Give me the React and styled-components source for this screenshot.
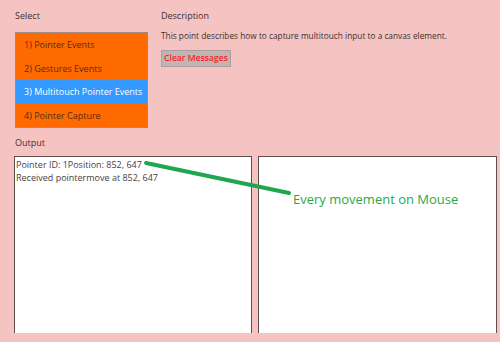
import React from "react";
import styled, { createGlobalStyle } from "styled-components";

const GlobalStyle = createGlobalStyle`
  html, body {
    margin: 0;
    padding: 0;
    background: #f6c3c3;
    font-family: "Open Sans", "Noto Sans", sans-serif;
  }
`;

const Page = styled.div`
  position: relative;
  width: 500px;
  height: 342px;
  overflow: hidden;
  padding: 9px 0 0 15px;
  box-sizing: border-box;
`;

const TopRow = styled.div`
  display: flex;
  gap: 13px;
`;

const Column = styled.div`
  display: flex;
  flex-direction: column;
`;

const Label = styled.div`
  font-size: 9px;
  line-height: 14px;
  color: #3a3030;
  height: 14px;
  margin-bottom: ${(p) => p.$gap || 9}px;
`;

const SelectList = styled.div`
  width: 133px;
  border: 1px solid #a08a8a;
  box-sizing: border-box;
  display: flex;
  flex-direction: column;
`;

const Option = styled.div`
  height: 23.5px;
  line-height: 23.5px;
  padding-left: 8px;
  font-size: 9px;
  color: ${(p) => (p.$selected ? "#ffffff" : "#5a2a10")};
  background: ${(p) => (p.$selected ? "#3399ff" : "#ff6a00")};
  white-space: nowrap;
`;

const Description = styled.div`
  font-size: 8.3px;
  line-height: 14px;
  color: #3a3030;
  margin-bottom: 7px;
`;

const ClearButton = styled.button`
  align-self: flex-start;
  width: 70px;
  height: 17px;
  padding: 0;
  border: 1px solid #b09c9c;
  background: #c0b4b4;
  color: #ff1f1f;
  font-family: "Open Sans", "Noto Sans", sans-serif;
  font-weight: 600;
  font-size: 8.6px;
  line-height: 15px;
  text-align: center;
`;

const OutputLabel = styled(Label)`
  margin-top: 8px;
  margin-bottom: 6px;
`;

const OutputRow = styled.div`
  display: flex;
  gap: 6px;
  margin-left: -1px;
`;

const OutputBox = styled.div`
  width: ${(p) => p.$w}px;
  height: 177px;
  background: #ffffff;
  border: 1px solid #5e4e4e;
  border-bottom: none;
  box-sizing: border-box;
  padding: 1px 0 0 1px;
  font-size: 9px;
  line-height: 13px;
  color: #4a4040;
`;

const Note = styled.div`
  color: #2aa84a;
  font-size: 13px;
  line-height: 16px;
  padding: 33px 0 0 33px;
  white-space: nowrap;
`;

const Arrow = styled.svg`
  position: absolute;
  left: 0;
  top: 0;
  pointer-events: none;
`;

const options = [
  "1) Pointer Events",
  "2) Gestures Events",
  "3) Multitouch Pointer Events",
  "4) Pointer Capture",
];

export default function App() {
  return (
    <>
      <GlobalStyle />
      <Page>
        <TopRow>
          <Column>
            <Label>Select</Label>
            <SelectList>
              {options.map((o, i) => (
                <Option key={o} $selected={i === 2}>
                  {o}
                </Option>
              ))}
            </SelectList>
          </Column>
          <Column>
            <Label $gap={6}>Description</Label>
            <Description>
              This point describes how to capture multitouch input to a canvas element.
            </Description>
            <ClearButton>Clear Messages</ClearButton>
          </Column>
        </TopRow>
        <OutputLabel>Output</OutputLabel>
        <OutputRow>
          <OutputBox $w={238}>
            <div>Pointer ID: 1Position: 852, 647</div>
            <div>Received pointermove at 852, 647</div>
          </OutputBox>
          <OutputBox $w={239}>
            <Note>Every movement on Mouse</Note>
          </OutputBox>
        </OutputRow>
        <Arrow width="500" height="342">
          <line x1="146" y1="163" x2="289" y2="193" stroke="#1fa650" strokeWidth="4" strokeLinecap="round" />
        </Arrow>
      </Page>
    </>
  );
}
